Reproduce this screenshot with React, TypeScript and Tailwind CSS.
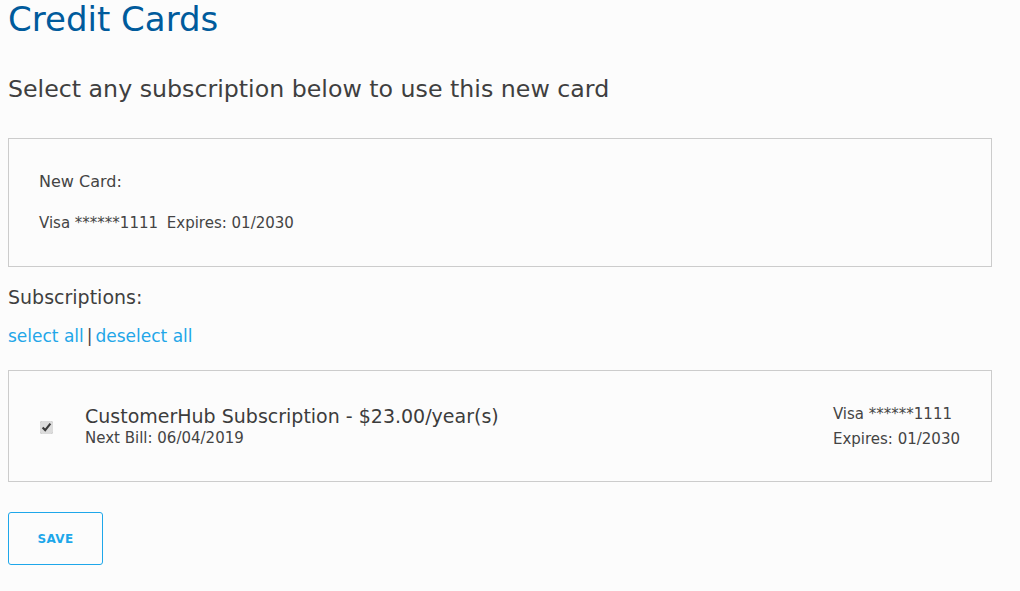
import React, { useState } from 'react';

const App: React.FC = () => {
  const [checked, setChecked] = useState(true);

  return (
    <div className="min-h-screen w-[1020px] bg-[#fcfcfc] text-[#444444] font-['DejaVu_Sans',sans-serif]">
      <div className="ml-2 w-[984px]">
        <h1 className="text-[34px] leading-[36px] text-[#005b9c] pt-[1px]">Credit Cards</h1>

        <h2 className="mt-[38px] text-[23.7px] leading-[28px] text-[#3f3f3f]">
          Select any subscription below to use this new card
        </h2>

        <div className="mt-[35px] h-[129px] border border-[#cccccc] pl-[30px] pt-[33px]">
          <div className="text-[16px] leading-[20px]">New Card:</div>
          <div className="mt-[21px] text-[15px] leading-[20px]">
            Visa ******1111 <span className="ml-[4px]">Expires: 01/2030</span>
          </div>
        </div>

        <div className="mt-[18px] text-[19px] leading-[24px] text-[#3f3f3f]">Subscriptions:</div>

        <div className="mt-[16px] text-[17px] leading-[22px]">
          <button className="text-[#22a6e8]" onClick={() => setChecked(true)}>select all</button>
          <span className="text-[#444] mx-[3px]">|</span>
          <button className="text-[#22a6e8]" onClick={() => setChecked(false)}>deselect all</button>
        </div>

        <div className="mt-[23px] h-[112px] border border-[#cccccc] flex items-center pl-[31px] pr-[31px]">
          <input
            type="checkbox"
            checked={checked}
            onChange={e => setChecked(e.target.checked)}
            className="w-[13px] h-[13px] mt-[2px] accent-[#dcdcdc]"
          />
          <div className="ml-[32px] flex-1">
            <div className="text-[19px] leading-[24px] text-[#3c3c3c]">CustomerHub Subscription - $23.00/year(s)</div>
            <div className="text-[15px] leading-[20px] text-[#444]">Next Bill: 06/04/2019</div>
          </div>
          <div className="text-[15px] leading-[25px] mt-[2px]">
            <div>Visa ******1111</div>
            <div>Expires: 01/2030</div>
          </div>
        </div>

        <button className="mt-[30px] w-[95px] h-[53px] border border-[#1ea7ea] rounded-[3px] text-[12px] font-bold text-[#1ea7ea] tracking-wide">
          SAVE
        </button>
      </div>
    </div>
  );
};

export default App;
